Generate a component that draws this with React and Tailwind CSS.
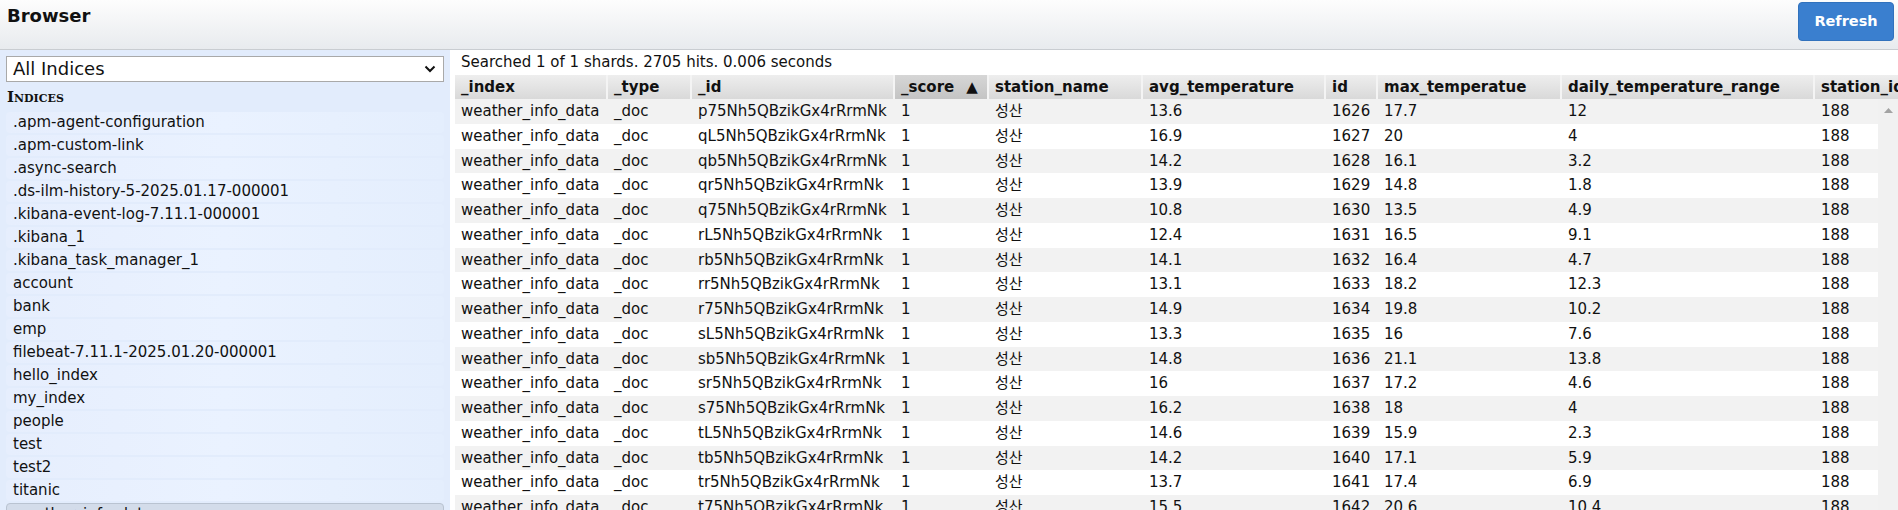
import React from "react";

// Index list in the left sidebar
const indices = [
  ".apm-agent-configuration",
  ".apm-custom-link",
  ".async-search",
  ".ds-ilm-history-5-2025.01.17-000001",
  ".kibana-event-log-7.11.1-000001",
  ".kibana_1",
  ".kibana_task_manager_1",
  "account",
  "bank",
  "emp",
  "filebeat-7.11.1-2025.01.20-000001",
  "hello_index",
  "my_index",
  "people",
  "test",
  "test2",
  "titanic",
  "weather_info_data",
];

const columns = [
  { key: "_index", w: "w-[153px]" },
  { key: "_type", w: "w-[84px]" },
  { key: "_id", w: "w-[203px]" },
  { key: "_score", w: "w-[94px]", sorted: true },
  { key: "station_name", w: "w-[154px]" },
  { key: "avg_temperature", w: "w-[183px]" },
  { key: "id", w: "w-[52px]" },
  { key: "max_temperatue", w: "w-[184px]" },
  { key: "daily_temperature_range", w: "w-[253px]" },
  { key: "station_id", w: "w-[140px]" },
];

// [id prefix, avg, id, max, range]
const raw = [
  ["p75", "13.6", "1626", "17.7", "12"],
  ["qL5", "16.9", "1627", "20", "4"],
  ["qb5", "14.2", "1628", "16.1", "3.2"],
  ["qr5", "13.9", "1629", "14.8", "1.8"],
  ["q75", "10.8", "1630", "13.5", "4.9"],
  ["rL5", "12.4", "1631", "16.5", "9.1"],
  ["rb5", "14.1", "1632", "16.4", "4.7"],
  ["rr5", "13.1", "1633", "18.2", "12.3"],
  ["r75", "14.9", "1634", "19.8", "10.2"],
  ["sL5", "13.3", "1635", "16", "7.6"],
  ["sb5", "14.8", "1636", "21.1", "13.8"],
  ["sr5", "16", "1637", "17.2", "4.6"],
  ["s75", "16.2", "1638", "18", "4"],
  ["tL5", "14.6", "1639", "15.9", "2.3"],
  ["tb5", "14.2", "1640", "17.1", "5.9"],
  ["tr5", "13.7", "1641", "17.4", "6.9"],
  ["t75", "15.5", "1642", "20.6", "10.4"],
];

const rows = raw.map(([p, avg, id, max, range]) => [
  "weather_info_data",
  "_doc",
  `${p}Nh5QBzikGx4rRrmNk`,
  "1",
  "성산",
  avg,
  id,
  max,
  range,
  "188",
]);

const App = () => {
  return (
    <div className="w-[1898px] h-[510px] overflow-hidden bg-white text-[#111] font-['DejaVu_Sans','Noto_Sans_CJK_KR',sans-serif] flex flex-col">
      {/* Top bar */}
      <div className="h-[50px] shrink-0 flex justify-between items-start border-b border-[#c9cdd1] bg-gradient-to-b from-[#fdfdfd] to-[#e8ebee]">
        <div className="pl-[7px] pt-[5px] text-[18px] leading-[22px] font-bold">Browser</div>
        <button className="mt-[2px] mr-[4px] w-[96px] h-[39px] rounded-[4px] bg-[#3a7fcf] border border-[#3172bd] text-white font-bold text-[14.5px]">
          Refresh
        </button>
      </div>

      <div className="flex flex-1 min-h-0">
        {/* Sidebar */}
        <div className="w-[450px] shrink-0 bg-[#e2ecfc] overflow-hidden">
          <div className="mt-[6px] mx-[6px] h-[26px] bg-white border border-[#a9a9a9] flex items-center justify-between pl-[6px] pr-[7px]">
            <span className="text-[18px] leading-[22px]">All Indices</span>
            <svg width="12" height="8" viewBox="0 0 12 8">
              <path d="M1.5 1.5 L6 6 L10.5 1.5" fill="none" stroke="#111" strokeWidth="2" />
            </svg>
          </div>
          <div className="mt-[6px] pl-[7px] text-[15px] leading-[18px] font-bold [font-variant:small-caps] font-['DejaVu_Serif',serif]">
            Indices
          </div>
          <div className="mt-[6px] flex flex-col gap-[2px]">
            {indices.map((name) => {
              const selected = name === "weather_info_data";
              return (
                <div
                  key={name}
                  className={
                    selected
                      ? "mx-[6px] h-[21px] shrink-0 rounded-[4px] pl-[7px] text-[15px] leading-[21px] bg-[#d3dcea] border border-[#b9c3d1]"
                      : "mx-[6px] h-[21px] shrink-0 rounded-[4px] pl-[7px] text-[15px] leading-[21px] bg-gradient-to-r from-[#e6eefd] via-[#eaf2ff] to-[#e4eefd]"
                  }
                >
                  {name}
                </div>
              );
            })}
          </div>
        </div>

        {/* Results */}
        <div className="flex-1 min-w-0 pl-[5px] flex flex-col">
          <div className="pt-[3px] pl-[6px] text-[15px] leading-[18px]">
            Searched 1 of 1 shards. 2705 hits. 0.006 seconds
          </div>
          <div className="mt-[4px] flex h-[24px] shrink-0 overflow-hidden bg-gradient-to-b from-[#eeeeee] to-[#d9d9d9]">
            {columns.map((c) => (
              <div
                key={c.key}
                className={`${c.w} shrink-0 h-full pl-[6px] flex items-center gap-[12px] font-bold text-[15px] whitespace-nowrap border-r-2 border-[#f4f4f4] ${
                  c.sorted ? "bg-gradient-to-b from-[#d6d6d6] to-[#c4c4c4]" : ""
                }`}
              >
                {c.key}
                {c.sorted && <span className="text-[15px] leading-none">▲</span>}
              </div>
            ))}
          </div>
          <div className="flex flex-1 min-h-0">
            <div className="flex-1 min-w-0 overflow-hidden">
              {rows.map((r, i) => (
                <div
                  key={r[2]}
                  className={`flex h-[24.75px] items-center ${i % 2 === 0 ? "bg-[#f2f2f2]" : "bg-white"}`}
                >
                  {r.map((v, j) => (
                    <div
                      key={j}
                      className={`${columns[j].w} shrink-0 pl-[6px] text-[15px] whitespace-nowrap`}
                    >
                      {v}
                    </div>
                  ))}
                </div>
              ))}
            </div>
            {/* Vertical scrollbar */}
            <div className="w-[20px] shrink-0 bg-[#f1f1f1] flex justify-center pt-[9px]">
              <svg width="9" height="5" viewBox="0 0 9 5">
                <path d="M0 5 L4.5 0 L9 5 Z" fill="#a3a3a3" />
              </svg>
            </div>
          </div>
        </div>
      </div>
    </div>
  );
};

export default App;
